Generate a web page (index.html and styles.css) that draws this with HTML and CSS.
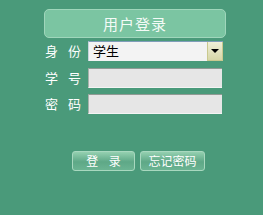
FILE: index.html
```html
<!DOCTYPE html>
<html lang="zh-CN">
<head>
    <meta charset="UTF-8">
    <title>用户登录</title>
    <link rel="stylesheet" href="styles.css">
</head>
<body>
    <div class="login">
        <div class="title">用户登录</div>

        <div class="form">
            <div class="row">
                <span class="label">身份</span>
                <div class="select">
                    <span class="value">学生</span>
                    <span class="arrow"></span>
                </div>
            </div>
            <div class="row">
                <span class="label">学号</span>
                <input class="field" type="text">
            </div>
            <div class="row">
                <span class="label">密码</span>
                <input class="field" type="password">
            </div>
        </div>

        <div class="buttons">
            <button class="btn btn-login">登 录</button>
            <button class="btn btn-forget">忘记密码</button>
        </div>
    </div>
</body>
</html>
```

FILE: styles.css
```css
body {
    margin: 0;
    background-color: #4a9a7a;
    font-family: "Noto Sans CJK SC", "DejaVu Sans", sans-serif;
}

.login {
    width: 182px;
    padding: 9px 0 0 44px;
}

.title {
    height: 27px;
    line-height: 27px;
    border: 1px solid #9fd6bb;
    border-radius: 5px;
    background-color: #7bc5a2;
    color: #f4fbf7;
    font-size: 15px;
    letter-spacing: 1px;
    text-align: center;
}

.form {
    display: flex;
    flex-direction: column;
    gap: 6px;
    margin-top: 3px;
}

.row {
    display: flex;
    align-items: center;
    height: 20px;
}

.row:first-child {
    margin-bottom: 1px;
}

.label {
    flex: none;
    width: 43px;
    padding-left: 1px;
    overflow: visible;
    white-space: nowrap;
    color: #ffffff;
    font-size: 13px;
    letter-spacing: 10px;
    line-height: 20px;
}

.select {
    display: flex;
    width: 135px;
    height: 20px;
    box-sizing: border-box;
    background-color: #f3f3f3;
    border-top: 1px solid #7f9db9;
    border-left: 1px solid #c8d4de;
}

.select .value {
    flex: 1;
    padding-left: 4px;
    font-size: 13px;
    line-height: 18px;
    color: #000000;
}

.select .arrow {
    position: relative;
    width: 16px;
    border: 1px solid #c9c98f;
    border-top: none;
    box-sizing: border-box;
    background: linear-gradient(#f0f0d8, #d6d6a8);
}

.select .arrow::after {
    content: "";
    position: absolute;
    left: 3px;
    top: 7px;
    border-left: 4px solid transparent;
    border-right: 4px solid transparent;
    border-top: 4px solid #000000;
}

.field {
    width: 134px;
    height: 20px;
    box-sizing: border-box;
    margin: 0;
    padding: 0 3px;
    background-color: #e6e6e6;
    border: none;
    border-top: 1px solid #909a94;
    border-left: 1px solid #a9b1ac;
    border-bottom: 1px solid #f4f4f4;
    outline: none;
}

.buttons {
    display: flex;
    gap: 5px;
    margin: 37px 0 0 28px;
}

.btn {
    height: 20px;
    padding: 0;
    border: 1px solid #a8d8bf;
    border-radius: 3px;
    background: linear-gradient(#94d0b0, #5ea887 55%, #6bb492);
    color: #ffffff;
    font-family: "Noto Sans CJK SC", "DejaVu Sans", sans-serif;
    font-size: 12px;
    line-height: 18px;
    cursor: pointer;
}

.btn-login {
    width: 63px;
    letter-spacing: 4px;
    text-indent: 4px;
}

.btn-forget {
    width: 65px;
}
```
